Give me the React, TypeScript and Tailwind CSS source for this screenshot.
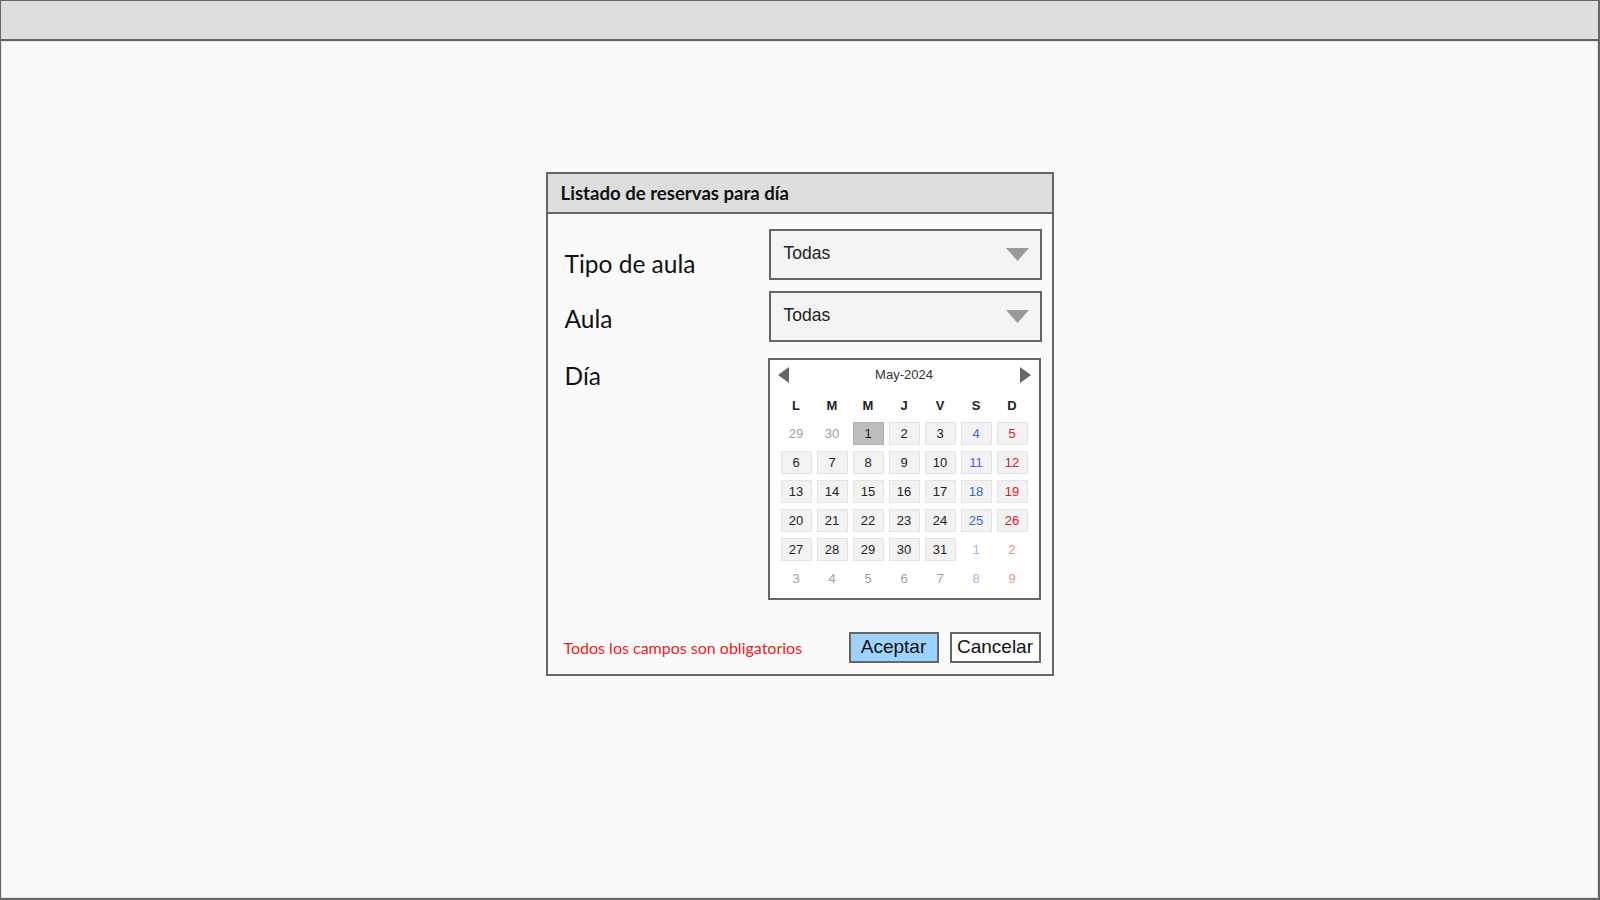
import React from "react";

const lato = { fontFamily: "Lato, 'Noto Sans', sans-serif" };
const arial = { fontFamily: "'Liberation Sans', Arial, sans-serif" };

type Cell = { d: number; kind: "in" | "out"; col: number };

function buildCells(): Cell[][] {
  const rows: Cell[][] = [];
  const first: number[] = [29, 30, 1, 2, 3, 4, 5];
  rows.push(first.map((d, i) => ({ d, kind: i < 2 ? "out" : "in", col: i })));
  let n = 6;
  for (let r = 0; r < 3; r++) {
    const row: Cell[] = [];
    for (let c = 0; c < 7; c++) row.push({ d: n++, kind: "in", col: c });
    rows.push(row);
  }
  const r5: Cell[] = [];
  for (let c = 0; c < 7; c++) {
    if (c < 5) r5.push({ d: 27 + c, kind: "in", col: c });
    else r5.push({ d: c - 4, kind: "out", col: c });
  }
  rows.push(r5);
  const r6: Cell[] = [];
  for (let c = 0; c < 7; c++) r6.push({ d: 3 + c, kind: "out", col: c });
  rows.push(r6);
  return rows;
}

function cellClass(c: Cell): string {
  if (c.kind === "out") {
    const color =
      c.col === 5 ? "text-[#a3b4e0]" : c.col === 6 ? "text-[#ec8f8f]" : "text-[#a0a0a0]";
    return "border border-transparent " + color;
  }
  const sel = c.d === 1;
  const bg = sel
    ? "bg-[#bdbdbd] border-[#b0b0b0]"
    : "bg-[#f2f2f2] border-[#e4e4e4]";
  const color =
    c.col === 5 ? "text-[#4068c0]" : c.col === 6 ? "text-[#d6202a]" : "text-[#222]";
  return "border " + bg + " " + color;
}

function Dropdown() {
  return (
    <div className="w-[273px] h-[51px] border-2 border-[#666] bg-[#f4f4f4] flex items-center justify-between pl-[13px] pr-[11px]">
      <span className="text-[17.5px] text-[#222] -mt-[2px]" style={arial}>
        Todas
      </span>
      <svg width="23" height="13" viewBox="0 0 23 13">
        <polygon points="0,0 23,0 11.5,13" fill="#999" />
      </svg>
    </div>
  );
}

function Calendar() {
  const rows = buildCells();
  const days = ["L", "M", "M", "J", "V", "S", "D"];
  return (
    <div className="w-[273px] h-[242px] border-2 border-[#666] bg-white flex flex-col" style={arial}>
      <div className="mt-[6px] h-[18px] flex items-center justify-between px-[8px]">
        <svg width="11" height="16" viewBox="0 0 11 16">
          <polygon points="11,0 11,16 0,8" fill="#666" />
        </svg>
        <span className="text-[13px] text-[#333]">May-2024</span>
        <svg width="11" height="16" viewBox="0 0 11 16">
          <polygon points="0,0 0,16 11,8" fill="#666" />
        </svg>
      </div>
      <div className="mt-[12px] px-[11px] grid grid-cols-7 gap-x-[5px] h-[18px]">
        {days.map((d, i) => (
          <div key={i} className="flex items-center justify-center text-[13px] font-bold text-[#222]">
            {d}
          </div>
        ))}
      </div>
      <div className="mt-[8px] px-[11px] grid grid-cols-7 gap-x-[5px] gap-y-[6px]">
        {rows.flat().map((c, i) => (
          <div
            key={i}
            className={"h-[23px] flex items-center justify-center text-[13px] " + cellClass(c)}
          >
            {c.d}
          </div>
        ))}
      </div>
    </div>
  );
}

export default function App() {
  return (
    <div className="w-[1600px] h-[900px] flex flex-col border-t border-l border-r-2 border-b-2 border-[#666] bg-[#fafafa]">
      <div className="h-[40px] shrink-0 bg-[#dedede] border-b-2 border-[#666]" />
      <div className="flex-1 border border-[#e2e2e2] bg-[#fafafa] flex justify-center pt-[130px]">
        <div className="w-[508px] h-[504px] border-2 border-[#666] bg-[#fafafa] flex flex-col">
          <div className="h-[40px] shrink-0 bg-[#dedede] border-b-2 border-[#666] flex items-center pl-[13px] pt-[1px]">
            <span className="text-[18.6px] font-bold text-[#111]" style={lato}>
              Listado de reservas para día
            </span>
          </div>
          <div className="flex flex-col pt-[15px]">
            <div className="flex pl-[17px]">
              <div className="w-[204px] pt-[20px]">
                <span className="text-[24.5px] leading-[29px] text-[#111]" style={lato}>
                  Tipo de aula
                </span>
              </div>
              <Dropdown />
            </div>
            <div className="flex pl-[17px] mt-[11px]">
              <div className="w-[204px] pt-[13px]">
                <span className="text-[24.5px] leading-[29px] text-[#111]" style={lato}>
                  Aula
                </span>
              </div>
              <Dropdown />
            </div>
            <div className="flex pl-[17px] mt-[16px]">
              <div className="w-[203px] pt-[3px]">
                <span className="text-[24.5px] leading-[29px] text-[#111]" style={lato}>
                  Día
                </span>
              </div>
              <Calendar />
            </div>
            <div className="flex items-center mt-[32px] pl-[16px] pr-[11px]">
              <span className="flex-1 text-[16px] text-[#ee1c1c]" style={lato}>
                Todos los campos son obligatorios
              </span>
              <button
                className="w-[90px] h-[31px] border-2 border-[#666] bg-[#9ed3ff] text-[19px] text-[#111] flex items-center justify-center"
                style={arial}
              >
                Aceptar
              </button>
              <button
                className="ml-[11px] w-[91px] h-[31px] border-2 border-[#666] bg-white text-[19px] text-[#111] flex items-center justify-center"
                style={arial}
              >
                Cancelar
              </button>
            </div>
          </div>
        </div>
      </div>
    </div>
  );
}
